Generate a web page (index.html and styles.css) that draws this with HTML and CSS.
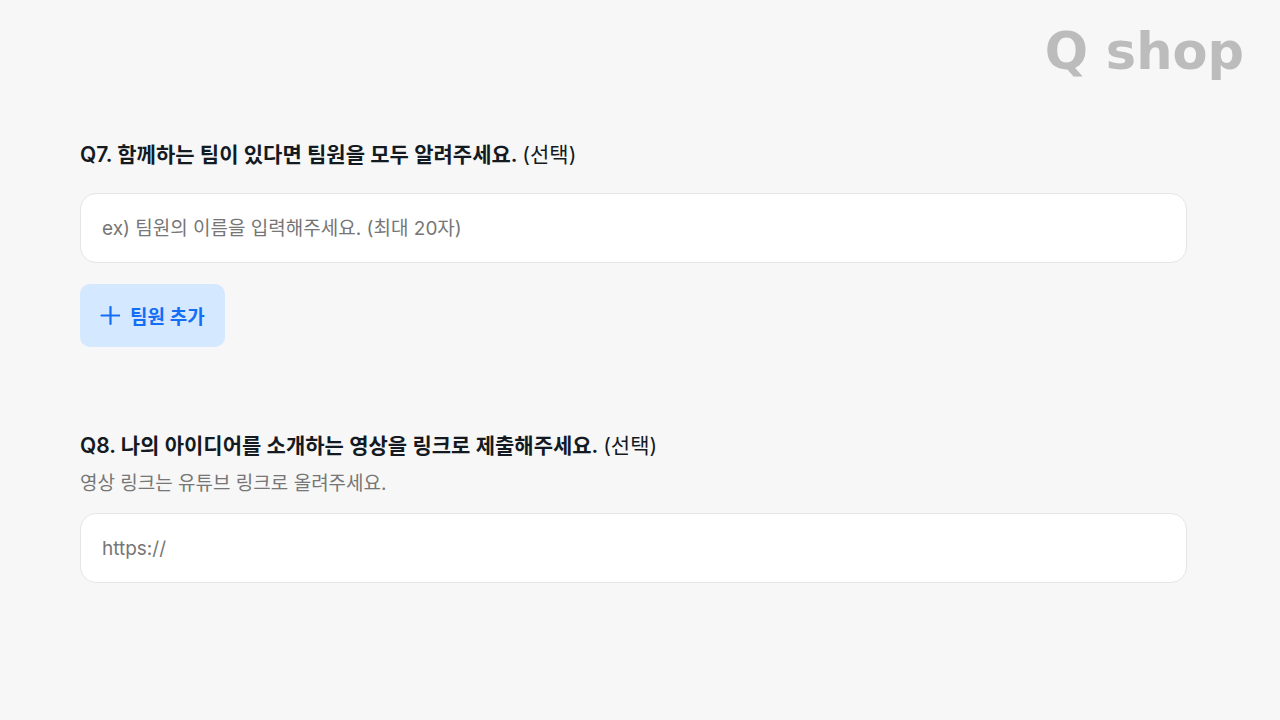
FILE: index.html
```html
<!DOCTYPE html>
<html lang="ko">
<head>
  <meta charset="UTF-8">
  <meta name="viewport" content="width=device-width, initial-scale=1">
  <title>Q shop</title>
  <link rel="stylesheet" href="styles.css">
</head>
<body>

<header class="header">
  <a class="logo" href="#">Q shop</a>
</header>

<form class="form">
  <section class="question">
    <label class="title" for="member">Q7. 함께하는 팀이 있다면 팀원을 모두 알려주세요. <span class="optional">(선택)</span></label>
    <input class="field" type="text" id="member" maxlength="20" placeholder="ex) 팀원의 이름을 입력해주세요. (최대 20자)">
    <button class="add-button" type="button">
      <svg class="plus" viewBox="0 0 20 20" aria-hidden="true">
        <path d="M10.5 1v17M1.5 9.5h18" fill="none" stroke="currentColor" stroke-width="2.2" stroke-linecap="round"/>
      </svg>
      팀원 추가
    </button>
  </section>

  <section class="question">
    <label class="title" for="video">Q8. 나의 아이디어를 소개하는 영상을 링크로 제출해주세요. <span class="optional">(선택)</span></label>
    <p class="help" id="videoHelp">영상 링크는 유튜브 링크로 올려주세요.</p>
    <input class="field" type="url" id="video" placeholder="https://" aria-describedby="videoHelp">
  </section>
</form>

</body>
</html>
```
FILE: styles.css
```css
* {
  box-sizing: border-box;
}

body {
  margin: 0;
  background: #f7f7f7;
  color: #141a22;
  font-family: Inter, "Noto Sans CJK KR", sans-serif;
}

.header {
  display: flex;
  justify-content: flex-end;
  padding: 22px 36px 0;
}

.logo {
  color: #bcbcbc;
  font-family: "DejaVu Sans", sans-serif;
  font-size: 51px;
  font-weight: bold;
  line-height: 60px;
  text-decoration: none;
}

.form {
  display: flex;
  flex-direction: column;
  gap: 84px;
  padding: 58px 93px 40px 80px;
}

.question {
  display: flex;
  flex-direction: column;
  align-items: flex-start;
}

.title {
  font-size: 21px;
  font-weight: 600;
  line-height: 30px;
}

.optional {
  font-weight: 400;
}

.help {
  margin: 9px 0 0;
  color: #767676;
  font-size: 19px;
  line-height: 28px;
}

.field {
  width: 100%;
  height: 70px;
  margin-top: 23px;
  padding: 0 21px;
  border: 1px solid #e5e5e5;
  border-radius: 16px;
  background: #fff;
  color: #141a22;
  font-family: inherit;
  font-size: 19px;
}

.help + .field {
  margin-top: 15px;
}

.field::placeholder {
  color: #767676;
  opacity: 1;
}

.add-button {
  display: flex;
  align-items: center;
  gap: 10px;
  height: 63px;
  margin-top: 21px;
  padding: 0 20px;
  border: none;
  border-radius: 10px;
  background: #d4e8ff;
  color: #146ef5;
  font-family: inherit;
  font-size: 19px;
  font-weight: 600;
  cursor: pointer;
}

.plus {
  width: 20px;
  height: 20px;
}
```
